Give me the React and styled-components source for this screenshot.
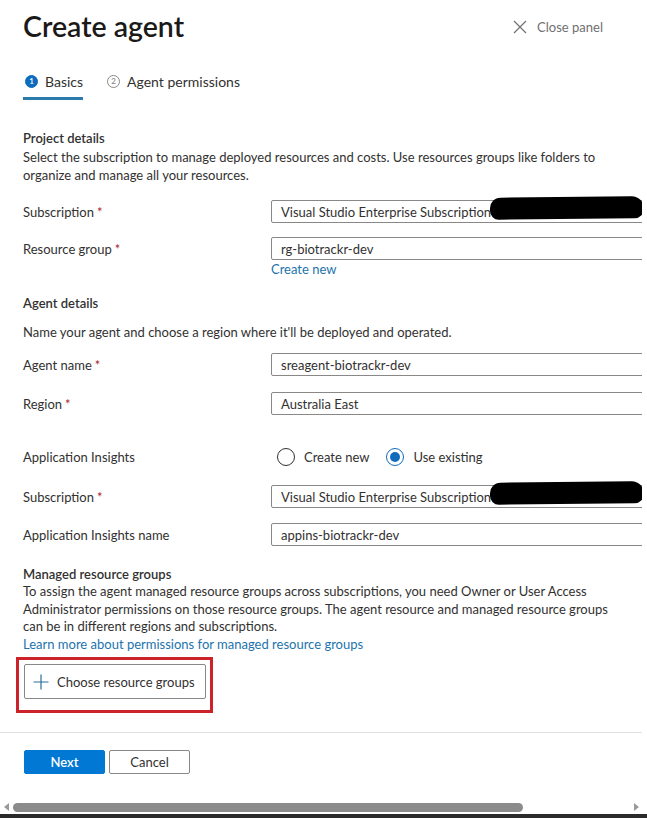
import React from "react";
import styled, { createGlobalStyle } from "styled-components";

const GlobalStyle = createGlobalStyle`
  html, body {
    margin: 0;
    padding: 0;
    background: #ffffff;
  }
  body {
    font-family: Lato, "Open Sans", sans-serif;
    color: #323130;
  }
`;

const Panel = styled.div`
  width: 647px;
  height: 818px;
  overflow: hidden;
  display: flex;
  flex-direction: column;
  background: #fff;
`;

const Viewport = styled.div`
  width: 642px;
  overflow: hidden;
  flex: 1;
  display: flex;
  flex-direction: column;
`;

const Header = styled.div`
  display: flex;
  justify-content: space-between;
  align-items: flex-start;
  padding: 8px 0 0 23px;
  height: 58px;
  box-sizing: border-box;
`;

const Title = styled.h1`
  margin: 0;
  font-size: 28.5px;
  line-height: 36px;
  font-weight: 600;
  color: #1b1a19;
`;

const CloseButton = styled.div`
  display: flex;
  align-items: center;
  gap: 10px;
  margin: 11px 39px 0 0;
  font-size: 13px;
  color: #707070;
`;

const Tabs = styled.div`
  display: flex;
  gap: 22px;
  padding-left: 23px;
  height: 42px;
  box-sizing: border-box;
`;

const Tab = styled.div`
  display: flex;
  align-items: center;
  gap: 7px;
  height: 42px;
  box-sizing: border-box;
  padding: 7px 0 0 2px;
  font-size: 14px;
  color: #323130;
  border-bottom: 3px solid ${(p) => (p.active ? "#2b7bab" : "transparent")};
`;

const StepBadge = styled.span`
  width: 13px;
  height: 13px;
  border-radius: 50%;
  box-sizing: border-box;
  display: inline-flex;
  align-items: center;
  justify-content: center;
  font-size: 8px;
  font-weight: 600;
  background: ${(p) => (p.active ? "#0f6cbd" : "#fff")};
  color: ${(p) => (p.active ? "#fff" : "#8a8886")};
  border: 1px solid ${(p) => (p.active ? "#0f6cbd" : "#8a8886")};
`;

const Body = styled.div`
  padding: 29px 0 0 23px;
  font-size: 13px;
  line-height: 18px;
`;

const SectionTitle = styled.div`
  font-weight: 600;
  color: #323130;
  margin-top: ${(p) => p.top || 0}px;
`;

const Description = styled.p`
  margin: ${(p) => p.top || 0}px 0 0;
  line-height: ${(p) => p.lh || 18}px;
  width: 600px;
`;

const FormRow = styled.div`
  display: grid;
  grid-template-columns: 248px 400px;
  align-items: center;
  margin-top: ${(p) => p.top || 0}px;
`;

const Label = styled.span`
  color: #323130;
`;

const Required = styled.span`
  color: #a4262c;
  margin-left: 3px;
`;

const InputBox = styled.div`
  position: relative;
  height: 23px;
  box-sizing: border-box;
  border: 1px solid #8a8886;
  border-radius: 2px;
  display: flex;
  align-items: center;
  padding-left: 9px;
  color: #323130;
`;

const Redaction = styled.div`
  position: absolute;
  left: 218px;
  top: -4px;
  width: 154px;
  height: 22px;
  background: #000;
  border-radius: 12px 14px 11px 10px;
  transform: rotate(-0.6deg);
`;

const Link = styled.a`
  color: #1c73ad;
  text-decoration: none;
  line-height: ${(p) => p.lh || 18}px;
  margin-top: ${(p) => p.top || 0}px;
  display: block;
`;

const RadioGroup = styled.div`
  display: flex;
  align-items: center;
  gap: 17px;
  padding-left: 6px;
  height: 24px;
`;

const RadioOption = styled.label`
  display: flex;
  align-items: center;
  gap: 9px;
`;

const RadioCircle = styled.span`
  width: 18px;
  height: 18px;
  box-sizing: border-box;
  border-radius: 50%;
  border: 1px solid ${(p) => (p.checked ? "#0f6cbd" : "#323130")};
  display: inline-flex;
  align-items: center;
  justify-content: center;
  &::after {
    content: "";
    width: 10px;
    height: 10px;
    border-radius: 50%;
    background: ${(p) => (p.checked ? "#0f6cbd" : "transparent")};
  }
`;

const Highlight = styled.div`
  margin: 4px 0 0 -7px;
  width: 197px;
  height: 56px;
  box-sizing: border-box;
  border: 3px solid #cc2229;
  padding: 4px 0 0 5px;
`;

const OutlineButton = styled.button`
  display: flex;
  align-items: center;
  gap: 8px;
  width: 182px;
  height: 35px;
  box-sizing: border-box;
  padding: 0 0 0 8px;
  background: #fff;
  border: 1px solid #8a8886;
  border-radius: 2px;
  font-family: inherit;
  font-size: 13px;
  color: #323130;
`;

const Footer = styled.div`
  border-top: 1px solid #e1dfdd;
  margin-top: auto;
  height: 68px;
  flex-shrink: 0;
  box-sizing: border-box;
  padding: 17px 0 0 24px;
  display: flex;
  gap: 4px;
  align-items: flex-start;
`;

const FooterButton = styled.button`
  width: 81px;
  height: 24px;
  box-sizing: border-box;
  border-radius: 2px;
  font-family: inherit;
  font-size: 13px;
  font-weight: ${(p) => (p.primary ? 600 : 400)};
  background: ${(p) => (p.primary ? "#0078d4" : "#fff")};
  color: ${(p) => (p.primary ? "#fff" : "#323130")};
  border: 1px solid ${(p) => (p.primary ? "#0078d4" : "#8a8886")};
`;

const ScrollTrack = styled.div`
  height: 14px;
  display: flex;
  align-items: center;
  gap: 4px;
  padding: 0 8px 0 4px;
  background: #fff;
`;

const ScrollThumb = styled.div`
  height: 9px;
  width: 510px;
  border-radius: 5px;
  background: #8b8b8b;
`;

const Arrow = styled.span`
  width: 0;
  height: 0;
  border-top: 4px solid transparent;
  border-bottom: 4px solid transparent;
  ${(p) =>
    p.dir === "left"
      ? "border-right: 5px solid #9a9a9a;"
      : "border-left: 5px solid #9a9a9a; margin-left: auto;"}
`;

const BottomEdge = styled.div`
  height: 4px;
  background: #2b2b2b;
`;

const CloseIcon = () => (
  <svg width="14" height="14" viewBox="0 0 14 14">
    <path d="M1 1L13 13M13 1L1 13" stroke="#707070" strokeWidth="1.2" fill="none" />
  </svg>
);

const PlusIcon = () => (
  <svg width="16" height="16" viewBox="0 0 16 16">
    <path d="M8 0.5V15.5M0.5 8H15.5" stroke="#2c6e9b" strokeWidth="1.2" fill="none" />
  </svg>
);

const Field = ({ label, required, value, redacted, top }) => (
  <FormRow top={top}>
    <Label>
      {label}
      {required && <Required>*</Required>}
    </Label>
    <InputBox>
      {value}
      {redacted && <Redaction />}
    </InputBox>
  </FormRow>
);

export default function App() {
  return (
    <>
      <GlobalStyle />
      <Panel>
        <Viewport>
          <Header>
            <Title>Create agent</Title>
            <CloseButton>
              <CloseIcon />
              Close panel
            </CloseButton>
          </Header>
          <Tabs>
            <Tab active>
              <StepBadge active>1</StepBadge>
              Basics
            </Tab>
            <Tab>
              <StepBadge>2</StepBadge>
              Agent permissions
            </Tab>
          </Tabs>
          <Body>
            <SectionTitle>Project details</SectionTitle>
            <Description top={1}>
              Select the subscription to manage deployed resources and costs. Use resources groups like folders to
              organize and manage all your resources.
            </Description>
            <Field top={16} label="Subscription" required value="Visual Studio Enterprise Subscription" redacted />
            <FormRow top={14}>
              <Label>
                Resource group<Required>*</Required>
              </Label>
              <InputBox>rg-biotrackr-dev</InputBox>
            </FormRow>
            <FormRow>
              <span />
              <Link>Create new</Link>
            </FormRow>

            <SectionTitle top={16}>Agent details</SectionTitle>
            <Description top={11}>Name your agent and choose a region where it'll be deployed and operated.</Description>
            <Field top={12} label="Agent name" required value="sreagent-biotrackr-dev" />
            <Field top={16} label="Region" required value="Australia East" />
            <FormRow top={30}>
              <Label>Application Insights</Label>
              <RadioGroup>
                <RadioOption>
                  <RadioCircle />
                  Create new
                </RadioOption>
                <RadioOption>
                  <RadioCircle checked />
                  Use existing
                </RadioOption>
              </RadioGroup>
            </FormRow>
            <Field top={16} label="Subscription" required value="Visual Studio Enterprise Subscription" redacted />
            <Field top={15} label="Application Insights name" value="appins-biotrackr-dev" />

            <SectionTitle top={19}>Managed resource groups</SectionTitle>
            <Description lh={17.5}>
              To assign the agent managed resource groups across subscriptions, you need Owner or User Access
              Administrator permissions on those resource groups. The agent resource and managed resource groups
              can be in different regions and subscriptions.
            </Description>
            <Link lh={17.5}>Learn more about permissions for managed resource groups</Link>
            <Highlight>
              <OutlineButton>
                <PlusIcon />
                Choose resource groups
              </OutlineButton>
            </Highlight>
          </Body>
          <Footer>
            <FooterButton primary>Next</FooterButton>
            <FooterButton>Cancel</FooterButton>
          </Footer>
        </Viewport>
        <ScrollTrack>
          <Arrow dir="left" />
          <ScrollThumb />
          <Arrow dir="right" />
        </ScrollTrack>
        <BottomEdge />
      </Panel>
    </>
  );
}
